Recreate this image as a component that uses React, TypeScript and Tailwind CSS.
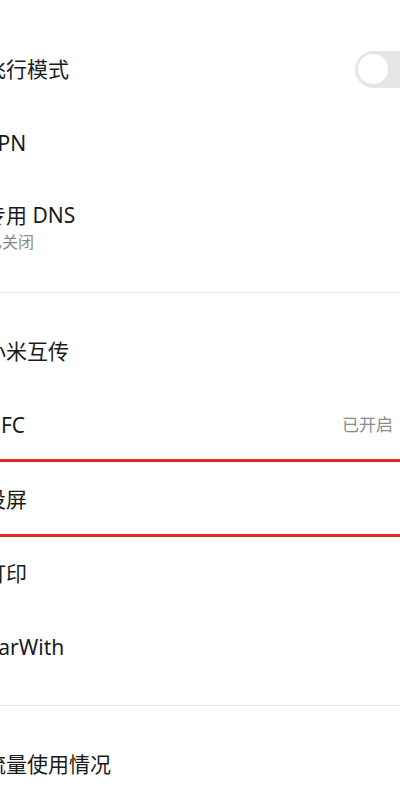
const FONT = { fontFamily: '"Noto Sans", "Noto Sans CJK SC", sans-serif' };

function Row({
  title,
  sub,
  right,
  className = "h-[74px]",
}: {
  title: string;
  sub?: string;
  right?: React.ReactNode;
  className?: string;
}) {
  return (
    <div className={`flex items-center justify-between pr-[7px] ${className}`}>
      <div className="-ml-[15px] flex flex-col">
        <span className="text-[21px] leading-[28px] text-[#1a1a1a]">{title}</span>
        {sub && <span className="mt-[1px] pl-[1px] text-[16px] leading-[24px] text-[#8a8a8a]">{sub}</span>}
      </div>
      {right}
    </div>
  );
}

export default function App() {
  return (
    <div className="relative h-[797px] w-[400px] overflow-hidden bg-white" style={FONT}>
      {/* header text, mostly scrolled out of view */}
      <div className="h-[32px] overflow-hidden">
        <div className="-mt-[19px] flex gap-[22px] pl-[5px] text-[16px] leading-[22px] text-[#d4d4d4]">
          <span>网络设置</span>
          <span>移动</span>
          <span>连接与共享</span>
        </div>
      </div>

      <Row
        title="飞行模式"
        right={
          <div className="-mr-[42px] flex h-[37px] w-[80px] items-center rounded-full bg-[#e6e6e6] pl-[3px]">
            <div className="h-[30px] w-[30px] rounded-full bg-white" />
          </div>
        }
      />
      <Row title="VPN" />
      <Row title="专用 DNS" sub="已关闭" className="h-[94px]" />

      <div className="mt-[18px] h-px bg-[#e6e6e6]" />

      <div className="mt-[21px]">
        <Row title="小米互传" />
        <Row title="NFC" right={<span className="text-[17px] text-[#8c8c8c]">已开启</span>} />
        <Row title="投屏" />
        <Row title="打印" />
        <Row title="CarWith" />
      </div>

      <div className="mt-[21px] h-px bg-[#e6e6e6]" />

      <div className="mt-[22px]">
        <Row title="流量使用情况" className="h-[72px]" />
      </div>

      {/* red annotation box */}
      <div className="absolute left-0 right-0 top-[459px] h-[3px] bg-[#e02a22]" />
      <div className="absolute left-0 right-0 top-[534px] h-[3px] bg-[#e02a22]" />
    </div>
  );
}
